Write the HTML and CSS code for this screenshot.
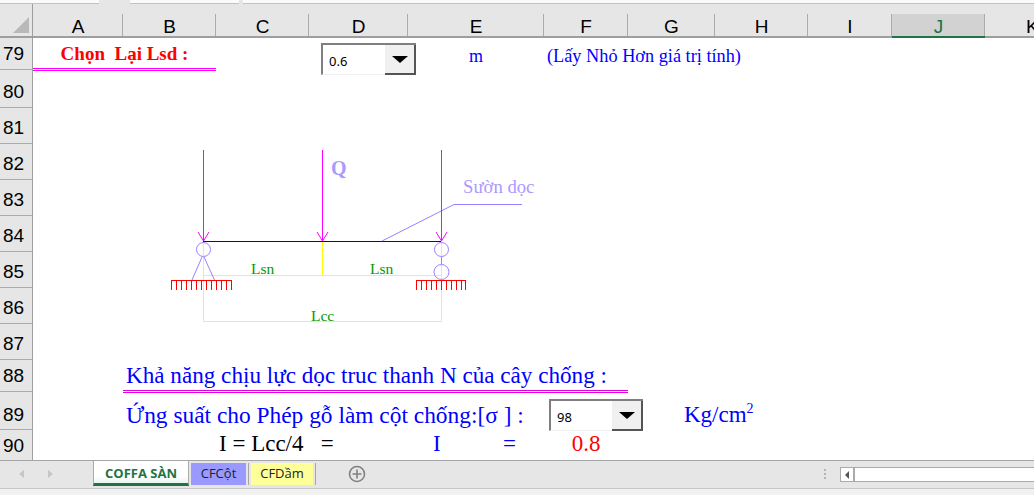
FILE: index.html
```html
<!DOCTYPE html>
<html lang="vi">
<head>
<meta charset="UTF-8">
<meta name="viewport" content="width=device-width, initial-scale=1.0">
<title>COFFA SÀN</title>
<link rel="stylesheet" href="styles.css">
</head>
<body>
  <!-- Thanh phia tren -->
  <div class="formula-bar">
    <div class="box box-name"></div>
    <div class="box box-mid"></div>
    <div class="box box-fx"></div>
  </div>

  <!-- Bang tinh -->
  <div class="sheet">
    <div class="corner"><span class="corner-mark"></span></div>
    <div class="col">A</div>
    <div class="col">B</div>
    <div class="col">C</div>
    <div class="col">D</div>
    <div class="col">E</div>
    <div class="col">F</div>
    <div class="col">G</div>
    <div class="col">H</div>
    <div class="col">I</div>
    <div class="col col-active">J</div>
    <div class="col col-last">K</div>

    <div class="row r79">79</div>
    <div class="row r80">80</div>
    <div class="row r81">81</div>
    <div class="row r82">82</div>
    <div class="row r83">83</div>
    <div class="row r84">84</div>
    <div class="row r85">85</div>
    <div class="row r86">86</div>
    <div class="row r87">87</div>
    <div class="row r88">88</div>
    <div class="row r89">89</div>
    <div class="row r90">90</div>

    <!-- Noi dung o -->
    <div class="cell chon-lsd">Chọn&nbsp; Lại Lsd :</div>
    <div class="cell unit-m">m</div>
    <div class="cell note-lsd">(Lấy Nhỏ Hơn giá trị tính)</div>
    <div class="cell kha-nang">Khả năng chịu lực dọc truc thanh N của cây chống :</div>
    <div class="cell ung-suat">Ứng suất cho Phép gỗ làm cột chống:[σ ] :</div>
    <div class="cell unit-kg">Kg/cm<sup>2</sup></div>
    <div class="cell lcc-formula">I = Lcc/4 &nbsp; =</div>
    <div class="cell i-label">I</div>
    <div class="cell i-equal">=</div>
    <div class="cell i-value">0.8</div>

    <!-- Hop chon -->
    <div class="combo combo-lsd">
      <span class="combo-value">0.6</span>
      <span class="combo-btn"><span class="combo-arrow"></span></span>
    </div>
    <div class="combo combo-sigma">
      <span class="combo-value">98</span>
      <span class="combo-btn"><span class="combo-arrow"></span></span>
    </div>

    <!-- So do dam -->
    <svg class="diagram" width="400" height="200" viewBox="160 140 400 200" xmlns="http://www.w3.org/2000/svg">
      <g class="yellow">
        <path d="M322.5 241V275.5M203.5 275.5H441.5M203.5 241V321.5H441.5M441.5 241V321.5"/>
      </g>
      <path class="blue" d="M203 241.5H441"/>
      <g class="purple">
        <circle cx="203.5" cy="249.5" r="7"/>
        <circle cx="441.5" cy="249.5" r="7"/>
        <circle cx="441.5" cy="272" r="7.5"/>
        <path d="M441.5 257V264M202 257L192 280M204 257L214.5 280M382 241L454 204.5H522"/>
      </g>
      <g class="magenta">
        <path d="M203.5 150V241M198 232L203.5 241L209 232"/>
        <path d="M322.5 150V241M317 232L322.5 241L328 232"/>
        <path d="M441.5 150V241M436 232L441.5 241L447 232"/>
      </g>
      <g class="red">
        <path d="M171 280.5H232M171.5 281V290M176.5 281V290M181.5 281V290M186.5 281V290M191.5 281V290M196.5 281V290M201.5 281V290M206.5 281V290M211.5 281V290M216.5 281V290M221.5 281V290M226.5 281V290M231.5 281V290"/>
        <path d="M416 280.5H466M416.5 281V290M421.5 281V290M426.5 281V290M431.5 281V290M436.5 281V290M441.5 281V290M446.5 281V290M451.5 281V290M456.5 281V290M461.5 281V290M465.5 281V290"/>
      </g>
      <text class="label-q" x="331" y="175">Q</text>
      <text class="label-suon" x="463" y="193">Sườn dọc</text>
      <text class="label-green" x="251" y="274">Lsn</text>
      <text class="label-green" x="370" y="274">Lsn</text>
      <text class="label-green" x="311" y="321">Lcc</text>
    </svg>
  </div>

  <!-- Thanh sheet -->
  <div class="tabbar">
    <div class="tab-nav">
      <span class="nav-left"></span>
      <span class="nav-right"></span>
    </div>
    <div class="tab tab-active">COFFA SÀN</div>
    <div class="tab tab-cot">CFCột</div>
    <span class="tab-sep"></span>
    <div class="tab tab-dam">CFDầm</div>
    <span class="tab-sep"></span>
    <svg class="add-sheet" width="18" height="18" viewBox="0 0 18 18" xmlns="http://www.w3.org/2000/svg">
      <circle cx="9" cy="9" r="7.5"/>
      <path d="M9 4.5V13.5M4.5 9H13.5"/>
    </svg>
    <div class="splitter"></div>
    <div class="hscroll">
      <span class="hscroll-btn"><span class="hscroll-arrow"></span></span>
      <span class="hscroll-track"></span>
    </div>
  </div>
  <div class="statusbar"></div>
</body>
</html>
```

FILE: styles.css
```css
/* Trang */
html, body {
  margin: 0;
  padding: 0;
  height: 495px;
  overflow: hidden;
  background: #fff;
}
body {
  display: flex;
  flex-direction: column;
  font-family: "Liberation Serif", serif;
}

/* Thanh phia tren */
.formula-bar {
  display: flex;
  height: 4px;
  background: #e6e6e6;
}
.box {
  height: 3px;
  background: #fbfbfb;
  border-bottom: 1px solid #c2c2c2;
}
.box-name { width: 99px; }
.box-mid { width: 109px; margin-left: 31px; }
.box-fx { flex: 1; margin-left: 4px; }

/* Luoi o */
.sheet {
  position: relative;
  display: grid;
  grid-template-columns: 33px 90px 93px 93px 99px 136px 84px 87px 93px 84px 93px 49px;
  grid-template-rows: 34px 32px 38px repeat(7, 36px) 32px 38px 30px;
  background: #fff;
}
.corner {
  display: flex;
  align-items: flex-end;
  justify-content: flex-end;
  padding: 0 3px 3px 0;
  background: #e6e6e6;
  border-right: 1px solid #9e9e9e;
  border-bottom: 2px solid #9e9e9e;
  box-sizing: border-box;
}
.corner-mark {
  width: 0;
  height: 0;
  border-left: 16px solid transparent;
  border-bottom: 16px solid #b9b9b9;
}
.col {
  box-sizing: border-box;
  display: flex;
  align-items: flex-end;
  justify-content: center;
  height: 34px;
  padding-bottom: 1px;
  font-family: "Liberation Sans", sans-serif;
  font-size: 19px;
  line-height: 17px;
  color: #000;
  background: #e6e6e6;
  border-bottom: 2px solid #9e9e9e;
  position: relative;
}
.col::after {
  content: "";
  position: absolute;
  right: 0;
  top: 10px;
  bottom: 0;
  width: 1px;
  background: #ababab;
}
.col-last { justify-content: flex-start; padding-left: 41px; }
.col-last::after { display: none; }
.col-active {
  color: #217346;
  background: linear-gradient(#e6e6e6 10px, #d2d2d2 10px);
  border-bottom: 2px solid #217346;
}
.row {
  box-sizing: border-box;
  grid-column: 1;
  display: flex;
  align-items: flex-end;
  padding: 0 0 4px 3px;
  font-family: "Liberation Sans", sans-serif;
  font-size: 19px;
  line-height: 23px;
  color: #000;
  background: #e6e6e6;
  border-right: 1px solid #9e9e9e;
  border-bottom: 1px solid #ababab;
}
.r79 { grid-row: 2; }
.r80 { grid-row: 3; }
.r81 { grid-row: 4; }
.r82 { grid-row: 5; }
.r83 { grid-row: 6; }
.r84 { grid-row: 7; }
.r85 { grid-row: 8; }
.r86 { grid-row: 9; }
.r87 { grid-row: 10; }
.r88 { grid-row: 11; }
.r89 { grid-row: 12; padding-bottom: 3px; }
.r90 { grid-row: 13; border-bottom: 0; padding-bottom: 3px; }

/* Noi dung o */
.cell {
  display: flex;
  align-items: flex-end;
  white-space: pre;
  color: #0000ff;
  font-size: 23px;
  line-height: 24px;
  box-sizing: border-box;
}
.chon-lsd {
  grid-area: 2 / 2 / 3 / 4;
  justify-content: center;
  height: 33px;
  padding-bottom: 2px;
  font-size: 19px;
  font-weight: bold;
  color: #ff0000;
  border-bottom: 3px double #ff00ff;
}
.unit-m {
  grid-area: 2 / 6 / 3 / 7;
  justify-content: center;
  padding-bottom: 2px;
  font-size: 18px;
}
.note-lsd {
  grid-area: 2 / 7 / 3 / 10;
  padding: 0 0 2px 3px;
  font-size: 18.3px;
}
.kha-nang {
  grid-area: 11 / 3 / 12 / 8;
  height: 33px;
  padding: 0 0 3px 3px;
  font-size: 23.15px;
  border-bottom: 3px double #e000e0;
}
.ung-suat {
  grid-area: 12 / 3 / 13 / 7;
  padding: 0 0 3px 3px;
  font-size: 23.4px;
}
.unit-kg {
  grid-area: 12 / 8 / 13 / 10;
  padding: 0 0 3px 56px;
}
.unit-kg sup {
  align-self: flex-start;
  font-size: 14px;
  line-height: 14px;
  margin-top: 10px;
}
.lcc-formula {
  grid-area: 13 / 3 / 14 / 6;
  padding: 0 0 4px 96px;
  color: #000;
}
.i-label {
  grid-area: 13 / 6 / 14 / 7;
  padding: 0 0 4px 25px;
}
.i-equal {
  grid-area: 13 / 6 / 14 / 7;
  padding: 0 0 4px 95px;
}
.i-value {
  grid-area: 13 / 7 / 14 / 8;
  justify-content: center;
  padding-bottom: 4px;
  color: #ff0000;
}

/* Hop chon */
.combo {
  position: absolute;
  box-sizing: border-box;
  display: flex;
  justify-content: space-between;
  height: 32px;
  background: #fff;
  border-top: 2px solid #7f7f7f;
  border-left: 2px solid #7f7f7f;
  border-bottom: 1px solid #f0f0f0;
  font-family: "Noto Sans", sans-serif;
  font-size: 13px;
  color: #000;
}
.combo-lsd { left: 321px; top: 39px; width: 95px; }
.combo-sigma { left: 549px; top: 395px; width: 94px; }
.combo-value {
  padding: 7px 0 0 6px;
  line-height: 18px;
}
.combo-btn {
  box-sizing: border-box;
  display: flex;
  align-items: center;
  justify-content: center;
  width: 31px;
  height: 30px;
  background: #f0f0f0;
  border-right: 2px solid #555;
  border-bottom: 2px solid #555;
}
.combo-arrow {
  width: 0;
  height: 0;
  border-left: 8px solid transparent;
  border-right: 8px solid transparent;
  border-top: 7px solid #000;
}

/* So do dam */
.diagram {
  position: absolute;
  left: 160px;
  top: 136px;
  overflow: visible;
}
.diagram path, .diagram circle {
  fill: none;
  stroke-width: 1;
}
.yellow path { stroke: #ffff00; shape-rendering: crispEdges; }
.blue { stroke: #0000c8; shape-rendering: crispEdges; }
.purple circle, .purple path { stroke: #9a80ff; }
.magenta path { stroke: #ff00ff; }
.red path { stroke: #ff0000; shape-rendering: crispEdges; }
.label-q {
  font-size: 20px;
  font-weight: bold;
  fill: #aa99ff;
}
.label-suon {
  font-size: 18.7px;
  fill: #ab99ff;
}
.label-green {
  font-size: 15.5px;
  fill: #009a00;
}

/* Thanh sheet */
.tabbar {
  box-sizing: border-box;
  display: flex;
  align-items: flex-start;
  height: 29px;
  background: #e6e6e6;
  border-top: 1px solid #a6a6a6;
  border-bottom: 1px solid #c6c6c6;
}
.tab-nav {
  display: flex;
  align-items: center;
  justify-content: space-between;
  box-sizing: border-box;
  width: 93px;
  height: 26px;
  padding: 0 40px 0 19px;
}
.nav-left, .nav-right {
  width: 0;
  height: 0;
  border-top: 4px solid transparent;
  border-bottom: 4px solid transparent;
}
.nav-left { border-right: 5px solid #c6c6c6; }
.nav-right { border-left: 5px solid #c6c6c6; }
.tab {
  box-sizing: border-box;
  font-family: "Open Sans", sans-serif;
  font-size: 13px;
  line-height: 21px;
  text-align: center;
  color: #222;
}
.tab-active {
  width: 96px;
  height: 25px;
  margin-right: 2px;
  font-weight: bold;
  line-height: 24px;
  color: #217346;
  background: linear-gradient(#fff 70%, #e6f5f0);
  border-left: 1px solid #ababab;
  border-right: 1px solid #ababab;
  border-bottom: 3px solid #217346;
}
.tab-cot {
  width: 55px;
  height: 22px;
  margin-top: 2px;
  background: #9999ff;
}
.tab-dam {
  width: 62px;
  height: 22px;
  margin-top: 2px;
  background: #ffff99;
}
.tab-sep {
  width: 1px;
  height: 22px;
  margin: 2px 2px 0;
  background: #a6a6a6;
}
.add-sheet {
  margin: 4px 0 0 30px;
}
.add-sheet circle, .add-sheet path {
  fill: none;
  stroke: #808080;
  stroke-width: 1.6;
}
.splitter {
  width: 2px;
  height: 11px;
  margin: 8px 0 0 458px;
  background: repeating-linear-gradient(#b4b4b4 0 2px, transparent 2px 4px);
}
.hscroll {
  box-sizing: border-box;
  display: flex;
  flex: 1;
  height: 15px;
  margin: 6px 0 0 14px;
  background: #fff;
  border: 1px solid #ababab;
  border-right: 0;
}
.hscroll-btn {
  box-sizing: border-box;
  display: flex;
  align-items: center;
  justify-content: center;
  width: 14px;
  border-right: 2px solid #ababab;
}
.hscroll-arrow {
  width: 0;
  height: 0;
  border-top: 4px solid transparent;
  border-bottom: 4px solid transparent;
  border-right: 4px solid #555;
}
.hscroll-track { flex: 1; }
.statusbar {
  flex: 1;
  background: #f1f1f1;
}
```
